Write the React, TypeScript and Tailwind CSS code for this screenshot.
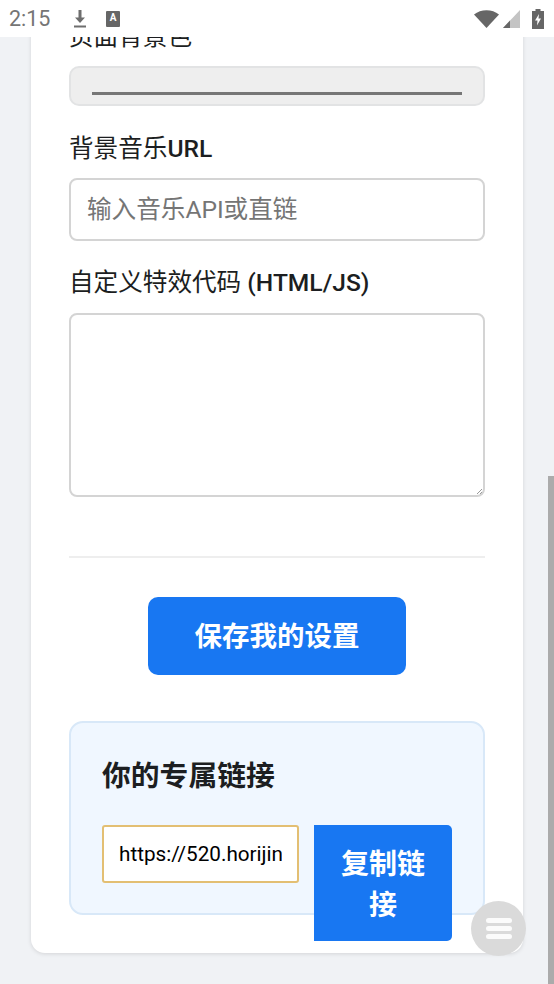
import React from 'react';

const FONT = "font-['Roboto','Noto_Sans_CJK_SC',sans-serif]";

const StatusBar: React.FC = () => (
    <div className="relative z-10 flex h-[37px] shrink-0 items-center bg-white pl-[9px] pr-[10px] text-[#666666]">
        <span className="w-[42px] text-[21.5px] leading-none text-[#757575]">2:15</span>
        <svg width="16" height="20" viewBox="0 0 16 20" className="ml-[21px]">
            <path d="M6.500 1h3v7.500h3.500L8 14 3 8.500h3.500z" fill="#6e6e6e" />
            <rect x="2" y="16.500" width="12" height="2" fill="#6e6e6e" />
        </svg>
        <div className="ml-[18px] flex h-[16px] w-[14px] items-start justify-center rounded-[1px] bg-[#666666] text-[10px] font-bold leading-[13px] text-white">A</div>
        <div className="ml-auto flex items-center">
            <svg width="25" height="18" viewBox="0 0 25 18">
                <path d="M0 4.500C3.500 1.800 7.800 0.300 12.500 0.300S21.500 1.800 25 4.500L12.500 18z" fill="#666666" />
            </svg>
            <svg width="17" height="18" viewBox="0 0 17 18" className="ml-[4px]">
                <path d="M0 18L17 0v18z" fill="#c4c4c4" />
                <path d="M0 18l7-7.500V18z" fill="#666666" />
            </svg>
            <svg width="12" height="20" viewBox="0 0 12 20" className="ml-[12px]">
                <path d="M3.500 0h5v2H12v18H0V2h3.500z" fill="#666666" />
                <path d="M7 5L3 11.500h2.500L5 16.500l4-7H6.500z" fill="#ffffff" />
            </svg>
        </div>
    </div>
);

const App: React.FC = () => {
    return (
        <div className={`relative flex h-[984px] w-[554px] flex-col overflow-hidden bg-[#f0f2f5] ${FONT}`}>
            <StatusBar />
            <div className="flex-1 overflow-hidden">
                <div className="mx-[31px] -mt-[26px] h-[942px] rounded-b-[14px] bg-white px-[38px] pt-[12px] shadow-[0_1px_4px_rgba(0,0,0,0.12)]">
                    <label className="block text-[24.6px] leading-[28px] text-[#1c1e21]">页面背景色</label>
                    <div className="mt-[15px] flex h-[40px] items-end rounded-[10px] border-2 border-[#e2e3e4] bg-[#eeeeee] px-[21px] pb-[9px]">
                        <div className="h-[3px] w-full bg-[#767676]" />
                    </div>

                    <label className="mt-[29px] block text-[24.6px] leading-[28px] text-[#1c1e21]">背景音乐<span className="font-medium">URL</span></label>
                    <input
                        type="text"
                        placeholder="输入音乐API或直链"
                        className="mt-[15px] block h-[63px] w-full rounded-[8px] border-2 border-[#d4d4d4] bg-white px-[16px] text-[24.6px] outline-none placeholder:text-[#757575]"
                    />

                    <label className="mt-[28px] block text-[24.6px] leading-[28px] text-[#1c1e21]">自定义特效代码 <span className="font-medium">(HTML/JS)</span></label>
                    <div className="relative mt-[16px]">
                        <textarea className="block h-[184px] w-full resize-none rounded-[8px] border-2 border-[#d4d4d4] bg-white outline-none" />
                        <svg width="8" height="8" viewBox="0 0 8 8" className="absolute bottom-[2px] right-[2px]">
                            <path d="M7 2L2 7M7 5L5 7" stroke="#9a9a9a" strokeWidth="1" />
                        </svg>
                    </div>

                    <div className="mt-[59px] h-[2px] bg-[#eeeeee]" />

                    <button className="mx-auto mt-[39px] block h-[78px] w-[258px] rounded-[10px] bg-[#1877f2] pt-[2px] text-[27.5px] font-bold text-white">保存我的设置</button>

                    <div className="mt-[46px] h-[194px] rounded-[14px] border-2 border-[#d8e8f8] bg-[#f0f7ff] pl-[31px] pt-[33px]">
                        <h3 className="text-[28.8px] font-bold leading-[40px] text-[#1c1e21]">你的专属链接</h3>
                        <div className="mt-[29px] flex items-start gap-[15px]">
                            <input
                                type="text"
                                readOnly
                                value="https://520.horijin.com/u/me"
                                className="h-[58px] w-[197px] rounded-[3px] border-2 border-[#e3bf73] bg-white px-[15px] text-[20.7px] text-black outline-none"
                            />
                            <button className="h-[116px] w-[138px] rounded-r-[5px] bg-[#1877f2] px-[20px] pt-[3px] text-[28px] font-bold leading-[41px] text-white">复制链接</button>
                        </div>
                    </div>
                </div>
            </div>

            {/* overlay scrollbar */}
            <div className="absolute right-0 top-[476px] h-[508px] w-[6px] bg-[#ababab]" />

            {/* floating menu button */}
            <div className="absolute left-[471px] top-[901px] flex h-[55px] w-[55px] flex-col items-center justify-center gap-[3px] rounded-full bg-[#dadada]">
                <div className="h-[5px] w-[26px] rounded-full bg-[#fbfbfb]" />
                <div className="h-[5px] w-[26px] rounded-full bg-[#fbfbfb]" />
                <div className="h-[5px] w-[26px] rounded-full bg-[#fbfbfb]" />
            </div>
        </div>
    );
};

export default App;
